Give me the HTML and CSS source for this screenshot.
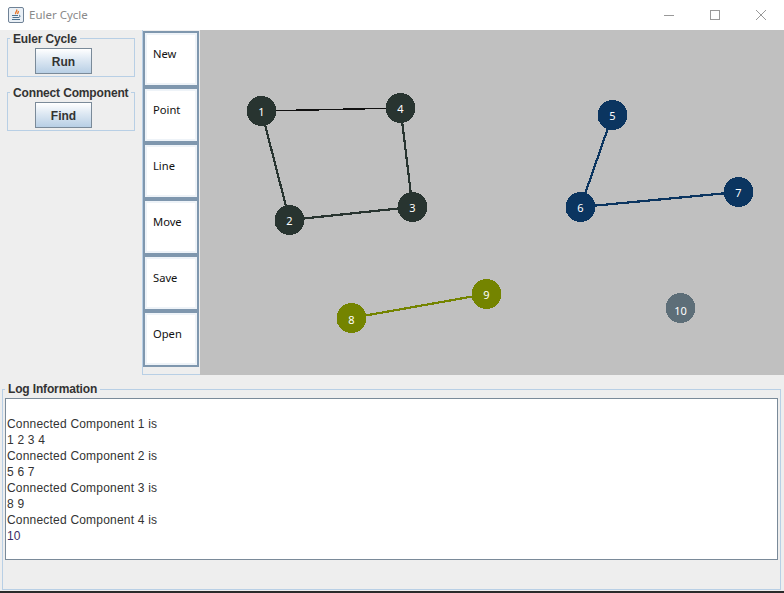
FILE: index.html
```html
<!DOCTYPE html>
<html>
    <head>
        <title>Euler Cycle</title>
        <link rel="stylesheet" href="styles.css">
    </head>

    <body>
        <div class="titlebar">
            <svg class="app-icon" width="16" height="16" viewBox="0 0 16 16">
                <rect x="0.5" y="0.5" width="15" height="15" rx="1.5" fill="#eaf0f6" stroke="#6f8296"/>
                <path d="M8.5 2.5c1.5 1.6-1.8 2.6-.8 4.6M10.3 4c.6 1-1 1.700-.5 3" fill="none" stroke="#e8762b" stroke-width="1.400"/>
                <path d="M4 8.500h6M4.500 10.500h6.500M4 12.500h8" stroke="#4d7191" stroke-width="1.100"/>
                <path d="M11 8.200c1.500 0 1.500 1.800 0 2" fill="none" stroke="#4d7191"/>
            </svg>
            <span class="app-title">Euler Cycle</span>
            <div class="win-controls">
                <svg width="12" height="12" viewBox="0 0 12 12"><path d="M1 6.500h10" stroke="#999"/></svg>
                <svg width="12" height="12" viewBox="0 0 12 12"><rect x="1.500" y="1.500" width="9" height="9" fill="none" stroke="#999"/></svg>
                <svg width="12" height="12" viewBox="0 0 12 12"><path d="M1 1l10 10M11 1L1 11" stroke="#999"/></svg>
            </div>
        </div>

        <div class="main">
            <div class="side">
                <fieldset class="group">
                    <legend>Euler Cycle</legend>
                    <button class="btn">Run</button>
                </fieldset>
                <fieldset class="group">
                    <legend>Connect Component</legend>
                    <button class="btn">Find</button>
                </fieldset>
            </div>

            <div class="tools">
                <button class="tool">New</button>
                <button class="tool">Point</button>
                <button class="tool">Line</button>
                <button class="tool">Move</button>
                <button class="tool">Save</button>
                <button class="tool">Open</button>
            </div>

            <svg class="canvas" width="584" height="345" viewBox="199.5 30 584 345">
                <g class="edges">
                    <path class="thin" d="M261 111L400 108" stroke="#111"/>
                    <path d="M261 111L289 220M289 220L412 207M412 207L400 108" stroke="#283430"/>
                    <path d="M612 115L580 207M580 207L738 192" stroke="#0b3560"/>
                    <path d="M351 318L486 294" stroke="#748400"/>
                </g>
                <g class="nodes">
                    <circle cx="261" cy="111" r="15" fill="#283430"/>
                    <circle cx="289" cy="220" r="15" fill="#283430"/>
                    <circle cx="412" cy="207" r="15" fill="#283430"/>
                    <circle cx="400" cy="108" r="15" fill="#283430"/>
                    <circle cx="612" cy="115" r="15" fill="#0b3560"/>
                    <circle cx="580" cy="207" r="15" fill="#0b3560"/>
                    <circle cx="738" cy="192" r="15" fill="#0b3560"/>
                    <circle cx="351" cy="318" r="15" fill="#748400"/>
                    <circle cx="486" cy="294" r="15" fill="#748400"/>
                    <circle cx="680" cy="308" r="15" fill="#5d6e78"/>
                </g>
                <g class="labels">
                    <text x="261" y="116">1</text>
                    <text x="289" y="225">2</text>
                    <text x="412" y="212">3</text>
                    <text x="400" y="113">4</text>
                    <text x="612" y="120">5</text>
                    <text x="580" y="212">6</text>
                    <text x="738" y="197">7</text>
                    <text x="351" y="324">8</text>
                    <text x="486" y="299">9</text>
                    <text x="680" y="315">10</text>
                </g>
            </svg>
        </div>

        <fieldset class="log">
            <legend>Log Information</legend>
            <div class="log-text">
                <div>&nbsp;</div>
                <div>Connected Component 1 is</div>
                <div>1 2 3 4</div>
                <div>Connected Component 2 is</div>
                <div>5 6 7</div>
                <div>Connected Component 3 is</div>
                <div>8 9</div>
                <div>Connected Component 4 is</div>
                <div class="last">10</div>
            </div>
        </fieldset>
    </body>
</html>
```

FILE: styles.css
```css
html, body {
    height: 100%;
}

body {
    display: flex;
    flex-direction: column;
    height: 593px;
    margin: 0;
    overflow: hidden;
    background-color: #eeeeee;
    font-family: "Liberation Sans", Arial, sans-serif;
    font-size: 12px;
    color: #333333;
    border-bottom: 2px solid #2b2b2b;
    box-sizing: border-box;
}

/* title bar */
.titlebar {
    display: flex;
    align-items: center;
    flex: none;
    height: 30px;
    padding-left: 8px;
    background-color: #ffffff;
}

.app-icon {
    margin-right: 5px;
}

.app-title {
    padding-bottom: 2px;
    font-family: "Noto Sans", sans-serif;
    font-size: 11.5px;
    color: #8a8a8a;
}

.win-controls {
    display: flex;
    gap: 34px;
    margin-left: auto;
    padding-right: 17px;
}

/* top part */
.main {
    display: flex;
    flex: none;
    height: 345px;
}

.side {
    display: flex;
    flex-direction: column;
    gap: 8px;
    flex: none;
    box-sizing: border-box;
    width: 142px;
    padding: 1px 7px 0 7px;
}

fieldset {
    margin: 0;
    border: 1px solid #b8cfe5;
    min-width: 0;
}

legend {
    font-weight: bold;
    color: #333333;
    white-space: nowrap;
    line-height: 14px;
    letter-spacing: -0.15px;
}

.group {
    height: 46px;
    box-sizing: border-box;
    padding: 0;
}

.group legend {
    margin-left: 2px;
    padding: 1px 3px 0 3px;
}

.btn {
    display: block;
    box-sizing: border-box;
    width: 57px;
    height: 26px;
    margin: 2px 0 0 27px;
    padding: 1px 0 0 0;
    border: 1px solid #7a8a99;
    background: linear-gradient(#ffffff, #dde8f3 45%, #b8cfe5);
    font: bold 12px "Liberation Sans", Arial, sans-serif;
    color: #333333;
}

.tools {
    display: flex;
    flex-direction: column;
    flex: none;
    box-sizing: border-box;
    width: 58px;
    padding-top: 1px;
    border-bottom: 1px solid #b8cfe5;
    border-left: 1px solid #b8cfe5;
}

.tool {
    box-sizing: border-box;
    width: 56px;
    height: 56px;
    padding: 0 0 11px 8px;
    border: 2px solid #7f97ae;
    box-shadow: inset 0 0 0 2px #eef3f8;
    background-color: #ffffff;
    text-align: left;
    font: 11.2px "Noto Sans", sans-serif;
    color: #111111;
}

.canvas {
    display: block;
    flex: none;
    background-color: #c0c0c0;
}

.edges path {
    stroke-width: 2.2;
    fill: none;
    shape-rendering: crispEdges;
}

.edges .thin {
    stroke-width: 1.5;
}

.nodes circle {
    shape-rendering: crispEdges;
}

.labels text {
    font-family: "Noto Sans", sans-serif;
    font-size: 11px;
    fill: #ffffff;
    text-anchor: middle;
}

/* log part */
.log {
    flex: none;
    box-sizing: border-box;
    height: 208px;
    margin: 7px 3px 0 2px;
    padding: 2px 2px 27px 2px;
}

.log legend {
    margin-left: 0;
    padding: 0 3px;
}

.log-text {
    box-sizing: border-box;
    height: 162px;
    padding: 1px 0 0 1px;
    border: 1px solid #7a8a99;
    background-color: #ffffff;
    line-height: 16px;
    letter-spacing: 0.2px;
    color: #333333;
}

.last {
    color: #3a2a66;
}
```
